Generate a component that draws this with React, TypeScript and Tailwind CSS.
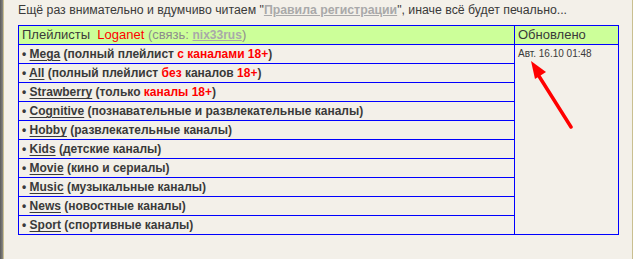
import React from "react";

type Seg = { t: string; red?: boolean };

const rows: { name: string; desc: Seg[] }[] = [
  { name: "Mega", desc: [{ t: "(полный плейлист " }, { t: "с каналами 18+", red: true }, { t: ")" }] },
  { name: "All", desc: [{ t: "(полный плейлист " }, { t: "без", red: true }, { t: " каналов " }, { t: "18+", red: true }, { t: ")" }] },
  { name: "Strawberry", desc: [{ t: "(только " }, { t: "каналы 18+", red: true }, { t: ")" }] },
  { name: "Cognitive", desc: [{ t: "(познавательные и развлекательные каналы)" }] },
  { name: "Hobby", desc: [{ t: "(развлекательные каналы)" }] },
  { name: "Kids", desc: [{ t: "(детские каналы)" }] },
  { name: "Movie", desc: [{ t: "(кино и сериалы)" }] },
  { name: "Music", desc: [{ t: "(музыкальные каналы)" }] },
  { name: "News", desc: [{ t: "(новостные каналы)" }] },
  { name: "Sport", desc: [{ t: "(спортивные каналы)" }] },
];

export default function App() {
  return (
    <div className="flex h-[259px] w-[633px] bg-[#f3f0e9] font-['Liberation_Sans',Arial,sans-serif] text-[13px] text-[#3a3a3a]">
      <div className="w-[3px] bg-gradient-to-r from-[#5a5a5a] to-[#8a8a86]" />
      <div className="w-[1px] bg-[#c9bf90]" />
      <div className="flex-1 pl-[14px] pt-[2px]">
        <div className="text-[12.3px] leading-[16px]">
          Ещё раз внимательно и вдумчиво читаем "
          <a className="font-bold text-[#a9a9a9] underline">Правила регистрации</a>
          ", иначе всё будет печально...
        </div>
        <table className="mt-[7px] w-[601px] border-collapse">
          <tbody>
            <tr className="h-[19px] bg-[#ccff99]">
              <td className="w-[496px] border border-[#0000ff] px-[3px] leading-[16px]">
                Плейлисты&nbsp; <span className="text-[#ff0000]">Loganet</span>{" "}
                <span className="text-[#8c8c8c]">
                  (связь: <a className="text-[12px] font-bold text-[#a9a9a9] underline">nix33rus</a>)
                </span>
              </td>
              <td className="border border-[#0000ff] px-[3px] leading-[16px]">Обновлено</td>
            </tr>
            {rows.map((r, i) => (
              <tr key={r.name} className="h-[19px]">
                <td className="border border-[#0000ff] px-[3px] text-[12px] font-bold leading-[16px]">
                  • <a className="underline underline-offset-2">{r.name}</a>{" "}
                  {r.desc.map((s, j) => (
                    <span key={j} className={s.red ? "text-[#ff0000]" : ""}>
                      {s.t}
                    </span>
                  ))}
                </td>
                {i === 0 && (
                  <td rowSpan={10} className="relative border border-[#0000ff] px-[3px] pt-[3px] align-top text-[10px] leading-[12px]">
                    Авт. 16.10 01:48
                    <svg className="absolute left-[8px] top-[8px]" width="50" height="76" viewBox="0 0 50 76">
                      <line x1="48" y1="74" x2="14" y2="20" stroke="#ff0000" strokeWidth="3.5" strokeLinecap="round" />
                      <polygon points="8,8 23,19 12,26" fill="#ff0000" />
                    </svg>
                  </td>
                )}
              </tr>
            ))}
          </tbody>
        </table>
      </div>
      <div className="w-[1px] bg-[#c9bf90]" />
    </div>
  );
}
